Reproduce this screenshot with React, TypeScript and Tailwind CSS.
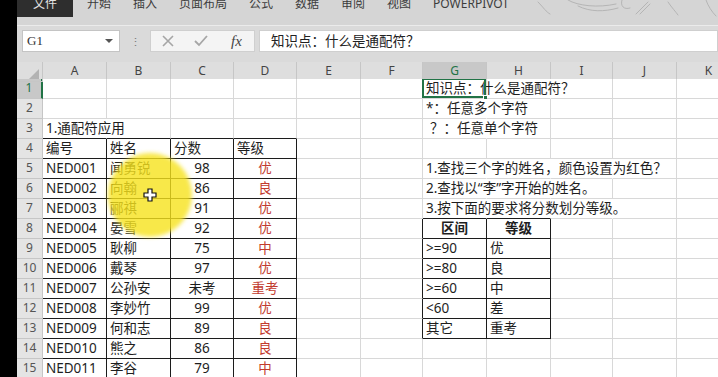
import React from 'react'

const COLS = ['A', 'B', 'C', 'D', 'E', 'F', 'G', 'H', 'I', 'J', 'K']
const ROWS = Array.from({ length: 15 }, (_, i) => i + 1)

type Cell = { t: string; center?: boolean; red?: boolean; bold?: boolean; indent?: boolean }

const students = [
    ['NED001', '闻勇锐', '98', '优'],
    ['NED002', '向翰', '86', '良'],
    ['NED003', '郦祺', '91', '优'],
    ['NED004', '晏雪', '92', '优'],
    ['NED005', '耿柳', '75', '中'],
    ['NED006', '戴琴', '97', '优'],
    ['NED007', '公孙安', '未考', '重考'],
    ['NED008', '李妙竹', '99', '优'],
    ['NED009', '何和志', '89', '良'],
    ['NED010', '熊之', '86', '良'],
    ['NED011', '李谷', '79', '中'],
]

const levels = [
    ['>=90', '优'],
    ['>=80', '良'],
    ['>=60', '中'],
    ['<60', '差'],
    ['其它', '重考'],
]

const cells: Record<string, Cell> = {
    G1: { t: '知识点：什么是通配符？' },
    G2: { t: '*：任意多个字符' },
    G3: { t: '？：任意单个字符', indent: true },
    A3: { t: '1.通配符应用' },
    A4: { t: '编号' },
    B4: { t: '姓名' },
    C4: { t: '分数' },
    D4: { t: '等级' },
    G5: { t: '1.查找三个字的姓名，颜色设置为红色？' },
    G6: { t: '2.查找以“李”字开始的姓名。' },
    G7: { t: '3.按下面的要求将分数划分等级。' },
    G8: { t: '区间', center: true, bold: true },
    H8: { t: '等级', center: true, bold: true },
}

students.forEach((s, i) => {
    const r = i + 5
    cells[`A${r}`] = { t: s[0] }
    cells[`B${r}`] = { t: s[1] }
    cells[`C${r}`] = { t: s[2], center: true }
    cells[`D${r}`] = { t: s[3], center: true, red: true }
})

levels.forEach((l, i) => {
    const r = i + 9
    cells[`G${r}`] = { t: l[0] }
    cells[`H${r}`] = { t: l[1] }
})

// cells whose right gridline is covered by overflowing text
const HIDE_R = new Set(['A3', 'H1', 'G2', 'G3', 'G5', 'H5', 'I5', 'G6', 'H6', 'G7', 'H7', 'I7'])

const inTable = (r: number, c: number) =>
    (r >= 4 && c <= 3) || (r >= 8 && r <= 13 && (c === 6 || c === 7))

const tabs = ['开始', '插入', '页面布局', '公式', '数据', '审阅', '视图', 'POWERPIVOT']

const GRID = 'grid grid-cols-[26px_64px_64px_63px_63px_64px_62px_64px_64px_62px_64px_64px]'

const Ribbon = () => (
    <div className="relative bg-[#d5d5d5]">
        <div className="flex h-[17px] items-start overflow-hidden">
            <div className="flex h-full w-[56px] justify-center bg-[#2e2e2e]">
                <span className="-mt-[3px] text-[12px] leading-[14px] text-[#e2e2e2]">文件</span>
            </div>
            <div className="ml-[14px] flex gap-[22px]">
                {tabs.map((t) => (
                    <span key={t} className="-mt-[3px] text-[12px] leading-[14px] text-[#3c3c3c]">
                        {t}
                    </span>
                ))}
            </div>
        </div>
        <div className="h-[9px] border-b border-[#ebebeb]" />
        {/* faint sketch decoration */}
        <svg className="absolute right-0 top-0" width="210" height="22" viewBox="0 0 210 22" fill="none">
            <g stroke="#b5b5b5" strokeWidth="1" strokeLinecap="round">
                <path d="M30 2 C36 8 38 12 42 14" />
                <path d="M60 0 C70 6 90 8 108 4" />
                <path d="M70 6 C82 12 96 12 110 8" />
                <path d="M114 0 C112 6 116 10 122 8" />
                <path d="M128 14 L140 2 M132 14 L142 4" />
                <path d="M160 2 C164 8 168 12 170 15" />
                <path d="M198 0 C200 6 204 12 208 16" />
            </g>
        </svg>
    </div>
)

const FormulaBar = () => (
    <div className="flex h-[36px] items-start bg-[#dadada] pl-[5px] pt-[4px]">
        <div className="flex h-[22px] w-[98px] items-center justify-between border border-[#c4c4c4] bg-white pl-[4px] pr-[6px]">
            <span className="font-['Liberation_Serif',serif] text-[13px] text-[#333]">G1</span>
            <span className="h-0 w-0 border-x-[4px] border-t-[4px] border-x-transparent border-t-[#555]" />
        </div>
        <div className="flex h-[22px] w-[30px] items-center justify-center text-[11px] leading-none text-[#777]">⋮</div>
        <div className="flex h-[22px] w-[105px] items-center border border-[#cfcfcf] bg-[#f4f4f4]">
            <svg className="ml-[11px]" width="12" height="12" viewBox="0 0 12 12">
                <path d="M1 1 L11 11 M11 1 L1 11" stroke="#a6a6a6" strokeWidth="1.6" />
            </svg>
            <svg className="ml-[20px]" width="14" height="12" viewBox="0 0 14 12">
                <path d="M1 6 L5 10 L13 1" stroke="#a6a6a6" strokeWidth="1.8" fill="none" />
            </svg>
            <span className="ml-[23px] font-['Liberation_Serif',serif] text-[15px] italic text-[#444]">fx</span>
        </div>
        <div className="ml-[4px] flex h-[22px] flex-1 items-center border border-[#cfcfcf] bg-white pl-[11px] text-[13.5px] text-[#222]">
            知识点：什么是通配符？
        </div>
    </div>
)

const HeaderRow = () => (
    <div className={`${GRID} h-[17px] bg-[#dedede]`}>
        <div className="relative border-r border-b border-[#c6c6c6]">
            <span className="absolute bottom-[2px] right-[3px] h-0 w-0 border-b-[10px] border-l-[10px] border-b-[#b3b3b3] border-l-transparent" />
        </div>
        {COLS.map((c) =>
            c === 'G' ? (
                <div key={c} className="flex items-center justify-center border-r border-b-2 border-r-[#c6c6c6] border-b-[#217346] bg-[#c8c8c8] text-[12px] text-[#217346]">
                    {c}
                </div>
            ) : (
                <div key={c} className="flex items-center justify-center border-r border-b border-[#c6c6c6] text-[12px] text-[#444]">
                    {c}
                </div>
            )
        )}
    </div>
)

const SheetRow = ({ r }: { r: number }) => (
    <div className={`${GRID} h-[20px]`}>
        {r === 1 ? (
            <div className="flex items-center justify-center border-r-2 border-b border-r-[#217346] border-b-[#c6c6c6] bg-[#c8c8c8] text-[12px] text-[#217346]">
                {r}
            </div>
        ) : (
            <div className="flex items-center justify-center border-r border-b border-[#c6c6c6] bg-[#e4e4e4] text-[12px] text-[#555]">
                {r}
            </div>
        )}
        {COLS.map((col, c) => {
            const id = `${col}${r}`
            const cell = cells[id]
            const rightBlack = inTable(r, c) || (r >= 8 && r <= 13 && c === 5)
            const bottomBlack = inTable(r, c) || (r === 3 && c <= 3) || (r === 7 && (c === 6 || c === 7))
            const rCls = rightBlack ? 'border-r-[#1c1c1c]' : HIDE_R.has(id) ? 'border-r-transparent' : 'border-r-[#d8d8d8]'
            const bCls = bottomBlack ? 'border-b-[#1c1c1c]' : 'border-b-[#d8d8d8]'
            return (
                <div
                    key={id}
                    className={`relative whitespace-nowrap border-r border-b ${rCls} ${bCls} text-[13.5px] leading-[19px] ${
                        cell?.center ? 'text-center' : cell?.indent ? 'pl-[7px]' : 'pl-[3px]'
                    } ${cell?.red ? 'text-[#c23b2e]' : 'text-[#1e1e1e]'} ${cell?.bold ? 'font-bold' : ''}`}
                >
                    {cell?.t}
                    {id === 'G1' && (
                        <span className="absolute -left-[1px] -top-[1px] bottom-0 right-0 border-2 border-[#217346]">
                            <span className="absolute -bottom-[4px] -right-[4px] size-[5px] border border-white bg-[#217346]" />
                        </span>
                    )}
                </div>
            )
        })}
    </div>
)

export default function App() {
    return (
        <div className="relative flex h-[377px] w-[718px] overflow-hidden bg-white font-['Noto_Sans','Noto_Sans_CJK_SC',sans-serif]">
            <div className="w-[17px] shrink-0 bg-black" />
            <div className="flex min-w-0 flex-1 flex-col">
                <Ribbon />
                <FormulaBar />
                <HeaderRow />
                <div className="overflow-hidden bg-white">
                    {ROWS.map((r) => (
                        <SheetRow key={r} r={r} />
                    ))}
                </div>
            </div>
            {/* presenter highlight under the mouse pointer */}
            <div className="pointer-events-none absolute left-[108px] top-[153px] size-[84px] rounded-full bg-[#f6e21c]/80 blur-[2px]" />
            <svg className="pointer-events-none absolute left-[143px] top-[188px]" width="14" height="14" viewBox="0 0 14 14">
                <path
                    d="M5 1 H9 V5 H13 V9 H9 V13 H5 V9 H1 V5 H5 Z"
                    fill="#fff"
                    stroke="#111"
                    strokeWidth="1.2"
                />
            </svg>
        </div>
    )
}
